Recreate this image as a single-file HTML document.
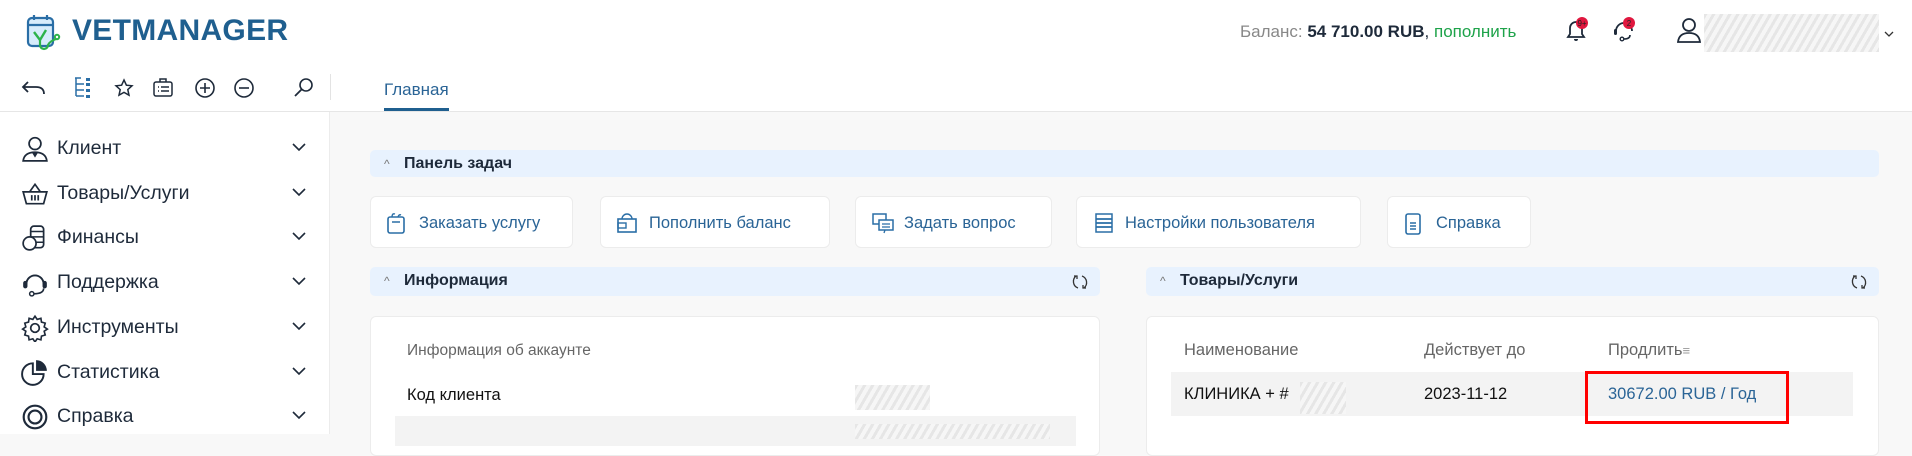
<!DOCTYPE html>
<html><head><meta charset="utf-8">
<style>
*{box-sizing:border-box;margin:0;padding:0}
body{width:1912px;height:434px;overflow:hidden;background:#f8f8f8;font-family:"Liberation Sans","Noto Sans CJK SC",sans-serif;color:#1e2a3a;position:relative}
.abs{position:absolute}
#top{left:0;top:0;width:1912px;height:112px;background:#fff;border-bottom:1px solid #e6e6e6}
#side{left:0;top:112px;width:330px;height:322px;background:#fff;border-right:1px solid #ececec}
.si{position:absolute;left:0;width:330px;height:40px;font-size:19.5px;line-height:40px}
.si svg.ic{position:absolute;left:21px;top:7px}
.si span{position:absolute;left:57px}
.si svg.ch{position:absolute;left:292px;top:15px}
.hdr{position:absolute;background:#e8f2fe;border-radius:5px;height:28px;font-size:16px;font-weight:bold;line-height:28px}
.hdr .car{position:absolute;left:14px;top:0;font-weight:normal;color:#777;font-size:12px}
.hdr b{position:absolute;left:34px}
.btn{position:absolute;top:196px;height:52px;background:#fff;border:1px solid #ececec;border-radius:6px;font-size:16.5px;color:#2a6496;line-height:52px}
.btn svg{position:absolute;left:15px;top:15px}
.btn span{position:absolute;left:48px}
.card{position:absolute;background:#fff;border:1px solid #ececec;border-radius:6px}
.blur{position:absolute;background:repeating-linear-gradient(120deg,#e6e6e6 0 3px,#f6f6f6 3px 7px)}
</style></head><body>
<div id="top" class="abs"></div>
<svg class="abs" style="left:24px;top:12px" width="40" height="40" viewBox="0 0 40 40">
<rect x="4" y="6" width="25" height="28" rx="4" fill="#d7ecfb" stroke="#2a6ea6" stroke-width="2.2"/>
<line x1="4" y1="13" x2="29" y2="13" stroke="#2a6ea6" stroke-width="2.2"/>
<line x1="10" y1="3" x2="10" y2="8" stroke="#2a6ea6" stroke-width="2.2"/><line x1="23" y1="3" x2="23" y2="8" stroke="#2a6ea6" stroke-width="2.2"/>
<path d="M10 20 L16 28 L22 18" fill="none" stroke="#2db34a" stroke-width="2.4"/>
<path d="M16 28 v5 a4 4 0 0 0 8 0 q2 -4 8 -6" fill="none" stroke="#2db34a" stroke-width="2.2"/><circle cx="33" cy="25" r="2.2" fill="none" stroke="#2db34a" stroke-width="2"/>
</svg>
<div class="abs" style="left:72px;top:14px;font-size:30px;font-weight:bold;color:#1f5f8f;letter-spacing:0.3px">VETMANAGER</div>
<div class="abs" style="left:1240px;top:22px;font-size:17px;color:#888">Баланс: <b style="color:#1e2a3a">54 710.00 RUB</b><span style="color:#1e2a3a">,</span> <span style="color:#1ea34a">пополнить</span></div>
<svg class="abs" style="left:1562px;top:16px" width="28" height="28" viewBox="0 0 28 28"><path d="M6 21 h16 l-2-3 v-6 a6 6 0 0 0-12 0 v6 z" fill="none" stroke="#1e2a3a" stroke-width="1.8"/><path d="M12 23 a2 2 0 0 0 4 0" fill="#1e2a3a"/><circle cx="20" cy="7" r="6" fill="#e0173f"/><text x="20" y="10" font-size="8" fill="#222" text-anchor="middle">9+</text></svg>
<svg class="abs" style="left:1610px;top:16px" width="28" height="28" viewBox="0 0 28 28"><path d="M6 15 a8 8 0 0 1 16 0" fill="none" stroke="#1e2a3a" stroke-width="1.8"/><rect x="4" y="13" width="3" height="6" rx="1.5" fill="#1e2a3a"/><path d="M20 19 q0 4 -6 4" fill="none" stroke="#1e2a3a" stroke-width="1.6"/><circle cx="12" cy="23" r="1.8" fill="none" stroke="#1e2a3a" stroke-width="1.4"/><circle cx="19" cy="7" r="6" fill="#e0173f"/><text x="19" y="10" font-size="8" fill="#222" text-anchor="middle">2</text></svg>
<svg class="abs" style="left:1676px;top:16px" width="26" height="28" viewBox="0 0 26 28"><circle cx="13" cy="9" r="6" fill="none" stroke="#1e2a3a" stroke-width="1.8"/><path d="M2 26 q1-9 11-9 q10 0 11 9 z" fill="none" stroke="#1e2a3a" stroke-width="1.8"/></svg>
<div class="blur" style="left:1704px;top:14px;width:175px;height:38px"></div>
<svg class="abs" style="left:1884px;top:30px" width="10" height="8"><path d="M1 2 l4 4 l4-4" fill="none" stroke="#333" stroke-width="1.3"/></svg>
<svg class="abs" style="left:20px;top:78px" width="26" height="20"><path d="M24 16 q0-7-8-7 H3 M8 4 L3 9 L8 14" fill="none" stroke="#1e2a3a" stroke-width="1.8"/></svg>
<svg class="abs" style="left:72px;top:76px" width="22" height="24"><path d="M3 2 h6 M4 2 v18 M4 8 h8 M4 14 h8 M4 20 h8" fill="none" stroke="#2a6ea6" stroke-width="1.5"/><rect x="14" y="2" width="4" height="3" fill="#2a6ea6"/><rect x="14" y="7" width="4" height="3" fill="#2a6ea6"/><rect x="14" y="13" width="4" height="3" fill="#2a6ea6"/><rect x="14" y="19" width="4" height="3" fill="#2a6ea6"/></svg>
<svg class="abs" style="left:114px;top:78px" width="20" height="20" viewBox="0 0 20 20"><path d="M10 2 l2.4 5.2 5.6.6-4.2 3.8 1.2 5.6L10 14.4 5 17.2l1.2-5.6L2 7.8l5.6-.6z" fill="none" stroke="#1e2a3a" stroke-width="1.5"/></svg>
<svg class="abs" style="left:152px;top:76px" width="22" height="22"><rect x="2" y="6" width="18" height="14" rx="2" fill="none" stroke="#1e2a3a" stroke-width="1.5"/><path d="M8 6 v-3 h6 v3 M6 11 h1 M9 11 h8 M6 15 h1 M9 15 h8" stroke="#1e2a3a" stroke-width="1.5" fill="none"/></svg>
<svg class="abs" style="left:194px;top:77px" width="22" height="22"><circle cx="11" cy="11" r="9" fill="none" stroke="#1e2a3a" stroke-width="1.6"/><path d="M11 6 v10 M6 11 h10" stroke="#1e2a3a" stroke-width="1.6"/></svg>
<svg class="abs" style="left:233px;top:77px" width="22" height="22"><circle cx="11" cy="11" r="9" fill="none" stroke="#1e2a3a" stroke-width="1.6"/><path d="M6 11 h10" stroke="#1e2a3a" stroke-width="1.6"/></svg>
<svg class="abs" style="left:293px;top:76px" width="22" height="22"><circle cx="13" cy="9" r="6" fill="none" stroke="#1e2a3a" stroke-width="1.6"/><path d="M8.5 13.5 L2 20" stroke="#1e2a3a" stroke-width="1.8"/></svg>
<div class="abs" style="left:330px;top:74px;width:1px;height:26px;background:#e3e3e3"></div>
<div class="abs" style="left:384px;top:80px;font-size:17px;color:#2a6496">Главная</div>
<div class="abs" style="left:384px;top:108px;width:65px;height:3px;background:#1f5f8f"></div>
<div id="side" class="abs"></div>
<div class="si" style="top:128px"><svg class="ic" width="28" height="28" viewBox="0 0 26 26"><circle cx="13" cy="8" r="5.5" fill="none" stroke="#1e2a3a" stroke-width="1.6"/><path d="M2 24 q1-8 11-8 q10 0 11 8 z" fill="none" stroke="#1e2a3a" stroke-width="1.6"/><path d="M10 16 l3 5 3-5" fill="#1e2a3a"/></svg><span>Клиент</span><svg class="ch" width="14" height="9"><path d="M1 1 l6 6 6-6" fill="none" stroke="#1e2a3a" stroke-width="1.6"/></svg></div>
<div class="si" style="top:173px"><svg class="ic" width="28" height="28" viewBox="0 0 26 26"><path d="M2 11 h22 l-3 11 h-16 z M8 11 l5-7 5 7 M10 14 v5 M13 14 v5 M16 14 v5" fill="none" stroke="#1e2a3a" stroke-width="1.6"/></svg><span>Товары/Услуги</span><svg class="ch" width="14" height="9"><path d="M1 1 l6 6 6-6" fill="none" stroke="#1e2a3a" stroke-width="1.6"/></svg></div>
<div class="si" style="top:217px"><svg class="ic" width="28" height="28" viewBox="0 0 26 26"><rect x="9" y="2" width="12" height="20" rx="3" fill="none" stroke="#1e2a3a" stroke-width="1.6"/><path d="M9 7 h12 M9 12 h12 M9 17 h12" stroke="#1e2a3a" stroke-width="1.4"/><circle cx="8" cy="18" r="6" fill="#fff" stroke="#1e2a3a" stroke-width="1.6"/></svg><span>Финансы</span><svg class="ch" width="14" height="9"><path d="M1 1 l6 6 6-6" fill="none" stroke="#1e2a3a" stroke-width="1.6"/></svg></div>
<div class="si" style="top:262px"><svg class="ic" width="28" height="28" viewBox="0 0 26 26"><path d="M5 14 a8 8 0 0 1 16 0" fill="none" stroke="#1e2a3a" stroke-width="1.8"/><rect x="2" y="11" width="4" height="7" rx="2" fill="#1e2a3a"/><rect x="20" y="11" width="4" height="7" rx="2" fill="#1e2a3a"/><path d="M21 18 q0 5-9 5" fill="none" stroke="#1e2a3a" stroke-width="1.5"/><circle cx="10" cy="23" r="2" fill="#fff" stroke="#1e2a3a" stroke-width="1.4"/></svg><span>Поддержка</span><svg class="ch" width="14" height="9"><path d="M1 1 l6 6 6-6" fill="none" stroke="#1e2a3a" stroke-width="1.6"/></svg></div>
<div class="si" style="top:307px"><svg class="ic" width="28" height="28" viewBox="0 0 26 26"><circle cx="13" cy="13" r="4" fill="none" stroke="#1e2a3a" stroke-width="1.6"/><path d="M13 2 l2 3 3.5-1 .5 3.5 3.5 1-1 3.5 3 2-3 2 1 3.5-3.5 1-.5 3.5-3.5-1-2 3-2-3-3.5 1-.5-3.5-3.5-1 1-3.5-3-2 3-2-1-3.5 3.5-1 .5-3.5 3.5 1z" fill="none" stroke="#1e2a3a" stroke-width="1.5"/></svg><span>Инструменты</span><svg class="ch" width="14" height="9"><path d="M1 1 l6 6 6-6" fill="none" stroke="#1e2a3a" stroke-width="1.6"/></svg></div>
<div class="si" style="top:352px"><svg class="ic" width="28" height="28" viewBox="0 0 26 26"><path d="M11 4 a10 10 0 1 0 10 10 h-10 z" fill="none" stroke="#1e2a3a" stroke-width="1.8"/><path d="M14 1 a10 10 0 0 1 10 10 h-10 z" fill="#1e2a3a"/></svg><span>Статистика</span><svg class="ch" width="14" height="9"><path d="M1 1 l6 6 6-6" fill="none" stroke="#1e2a3a" stroke-width="1.6"/></svg></div>
<div class="si" style="top:396px"><svg class="ic" width="28" height="28" viewBox="0 0 26 26"><circle cx="13" cy="13" r="10.5" fill="none" stroke="#1e2a3a" stroke-width="2"/><circle cx="13" cy="13" r="6" fill="none" stroke="#1e2a3a" stroke-width="2"/></svg><span>Справка</span><svg class="ch" width="14" height="9"><path d="M1 1 l6 6 6-6" fill="none" stroke="#1e2a3a" stroke-width="1.6"/></svg></div>
<div class="hdr" style="left:370px;top:150px;width:1509px;height:27px"><span class="car">^</span><b>Панель задач</b></div>
<div class="btn" style="left:370px;width:203px"><svg width="20" height="22" viewBox="0 0 20 22"><rect x="2" y="5" width="16" height="16" rx="2" fill="none" stroke="#2a6ea6" stroke-width="1.6"/><path d="M6 10 h8 M6 5 q0-4 3-3 M12 5 q1-3 3-2" fill="none" stroke="#2a6ea6" stroke-width="1.4"/></svg><span>Заказать услугу</span></div>
<div class="btn" style="left:600px;width:230px"><svg width="22" height="22" viewBox="0 0 22 22"><rect x="2" y="7" width="18" height="13" fill="none" stroke="#2a6ea6" stroke-width="1.6"/><rect x="2" y="11" width="8" height="5" fill="none" stroke="#2a6ea6" stroke-width="1.4"/><path d="M6 7 a5 5 0 0 1 10 0" fill="none" stroke="#2a6ea6" stroke-width="1.4"/></svg><span>Пополнить баланс</span></div>
<div class="btn" style="left:855px;width:197px"><svg width="24" height="22" viewBox="0 0 24 22"><rect x="2" y="2" width="13" height="10" fill="none" stroke="#2a6ea6" stroke-width="1.5"/><rect x="8" y="8" width="14" height="10" fill="#fff" stroke="#2a6ea6" stroke-width="1.5"/><path d="M11 12 h8 M11 15 h8 M14 18 l-1 3" stroke="#2a6ea6" stroke-width="1.3"/></svg><span>Задать вопрос</span></div>
<div class="btn" style="left:1076px;width:285px"><svg width="24" height="22" viewBox="0 0 24 22"><rect x="4" y="2" width="16" height="18" fill="none" stroke="#2a6ea6" stroke-width="1.5"/><path d="M4 7 h16 M4 11 h16 M4 15 h16" stroke="#2a6ea6" stroke-width="1.8"/></svg><span>Настройки пользователя</span></div>
<div class="btn" style="left:1387px;width:144px"><svg width="20" height="24" viewBox="0 0 20 24"><rect x="3" y="2" width="14" height="20" rx="2" fill="none" stroke="#2a6ea6" stroke-width="1.6"/><path d="M7 11 h6 M7 14 h6 M7 17 h6" stroke="#2a6ea6" stroke-width="1.4"/></svg><span>Справка</span></div>
<div class="hdr" style="left:370px;top:267px;width:730px;height:29px"><span class="car">^</span><b>Информация</b><svg style="position:absolute;right:12px;top:6px" width="16" height="18" viewBox="0 0 16 18"><path d="M4 3 a7 7 0 0 0 2 12 M12 15 a7 7 0 0 0-2-12 M2 3 h3 v3 M14 15 h-3 v-3" fill="none" stroke="#333" stroke-width="1.3"/></svg></div>
<div class="hdr" style="left:1146px;top:267px;width:733px;height:29px"><span class="car">^</span><b>Товары/Услуги</b><svg style="position:absolute;right:12px;top:6px" width="16" height="18" viewBox="0 0 16 18"><path d="M4 3 a7 7 0 0 0 2 12 M12 15 a7 7 0 0 0-2-12 M2 3 h3 v3 M14 15 h-3 v-3" fill="none" stroke="#333" stroke-width="1.3"/></svg></div>
<div class="card" style="left:370px;top:316px;width:730px;height:140px"></div>
<div class="abs" style="left:407px;top:342px;font-size:15.5px;color:#666">Информация об аккаунте</div>
<div class="abs" style="left:407px;top:386px;font-size:16.5px;color:#111">Код клиента</div>
<div class="blur" style="left:855px;top:385px;width:75px;height:25px"></div>
<div class="abs" style="left:395px;top:416px;width:681px;height:30px;background:#f3f3f3"></div>
<div class="blur" style="left:855px;top:424px;width:195px;height:15px"></div>
<div class="card" style="left:1146px;top:316px;width:733px;height:140px"></div>
<div class="abs" style="left:1184px;top:341px;font-size:16.5px;color:#666">Наименование</div>
<div class="abs" style="left:1424px;top:341px;font-size:16.5px;color:#666">Действует до</div>
<div class="abs" style="left:1608px;top:341px;font-size:16.5px;color:#666">Продлить<span style="font-size:13px;color:#999">&#8801;</span></div>
<div class="abs" style="left:1171px;top:372px;width:682px;height:44px;background:#f3f3f3"></div>
<div class="abs" style="left:1184px;top:385px;font-size:16.5px;color:#111">КЛИНИКА + #</div>
<div class="blur" style="left:1300px;top:382px;width:46px;height:32px"></div>
<div class="abs" style="left:1424px;top:385px;font-size:16.5px;color:#111">2023-11-12</div>
<div class="abs" style="left:1585px;top:371px;width:204px;height:53px;border:3px solid #f00"></div>
<div class="abs" style="left:1608px;top:385px;font-size:16.5px;color:#2a6496">30672.00 RUB / Год</div>
</body></html>
